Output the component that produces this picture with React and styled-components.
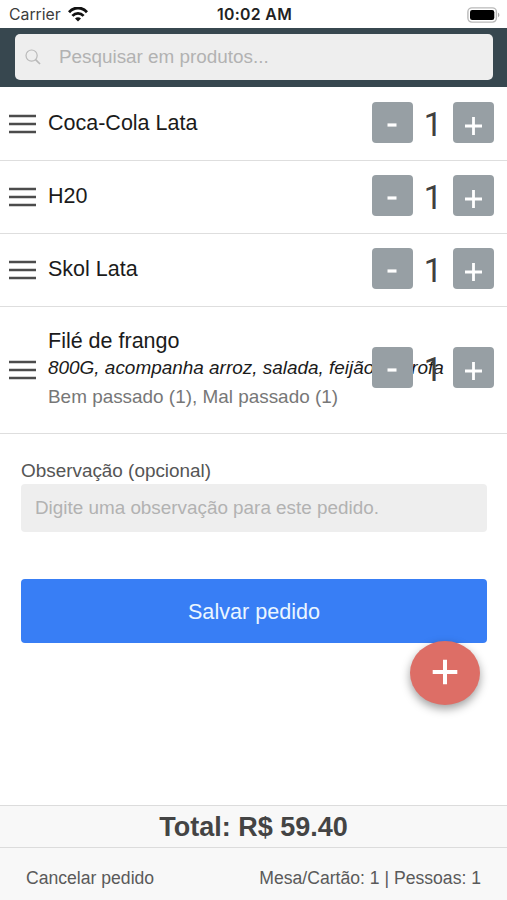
import React from 'react';
import styled, { createGlobalStyle } from 'styled-components';

const GlobalStyle = createGlobalStyle`
  * { box-sizing: border-box; }
  body {
    margin: 0;
    background: #fff;
    font-family: 'Liberation Sans', Arial, sans-serif;
    color: #4a4a4a;
  }
  button, input { font-family: inherit; }
`;

const Screen = styled.div`
  position: relative;
  display: flex;
  flex-direction: column;
  width: 507px;
  height: 900px;
  overflow: hidden;
  background: #fff;
`;

const StatusBar = styled.div`
  display: grid;
  grid-template-columns: 1fr auto 1fr;
  align-items: center;
  height: 28px;
  flex: none;
  padding: 1px 7px 0 9px;
  font-family: Inter, sans-serif;
`;

const Carrier = styled.div`
  display: flex;
  align-items: center;
  gap: 7px;
  font-size: 15.8px;
  color: #3c3c3c;
  svg { display: block; }
`;

const Clock = styled.div`
  font-size: 15.8px;
  font-weight: 600;
  letter-spacing: 0.35px;
  color: #222;
`;

const Battery = styled.svg`
  justify-self: end;
  display: block;
`;

const Toolbar = styled.header`
  flex: none;
  height: 59px;
  padding: 6px 14px 7px 15px;
  background: #37474f;
`;

const SearchBox = styled.label`
  display: flex;
  align-items: center;
  height: 46px;
  padding-left: 10px;
  gap: 18px;
  border-radius: 5px;
  background: #eee;
  svg { flex: none; }
`;

const Input = styled.input`
  flex: 1;
  min-width: 0;
  padding: 0;
  border: 0;
  outline: 0;
  background: transparent;
  font-size: 18.87px;
  color: #444;
  &::placeholder { color: #b2b2b2; opacity: 1; }
`;

const ProductList = styled.ul`
  flex: none;
  margin: 0;
  padding: 1px 0 0;
  list-style: none;
`;

const ProductRow = styled.li`
  display: flex;
  align-items: center;
  height: ${(p) => (p.$tall ? 127 : 73)}px;
  padding: 0 13px 2px 9px;
  border-bottom: 1px solid #dedede;
`;

const DragHandle = styled.svg`
  flex: none;
  display: block;
  margin: 1px 12px 0 0;
`;

const ProductInfo = styled.div`
  flex: 1;
  min-width: 0;
  padding-top: ${(p) => (p.$tall ? 3 : 0)}px;
  white-space: nowrap;
`;

const ProductName = styled.div`
  font-size: 21.5px;
  line-height: 26px;
  color: #1b1b1b;
`;

const Description = styled.div`
  font-size: 18.95px;
  line-height: 27px;
  font-style: italic;
  color: #1b1b1b;
`;

const Options = styled.div`
  font-size: 18.92px;
  line-height: 32px;
  color: #777;
`;

const Stepper = styled.div`
  position: relative;
  flex: none;
  display: grid;
  grid-template-columns: 41px 40px 41px;
  align-items: center;
  height: 41px;
  margin-bottom: ${(p) => (p.$tall ? 6 : 4)}px;
  text-align: center;
`;

const StepButton = styled.button`
  display: grid;
  place-items: center;
  width: 41px;
  height: 41px;
  padding: 0;
  border: 0;
  border-radius: 4px;
  background: #979fa4;
  color: #fff;
`;

const Quantity = styled.span`
  font-family: Roboto, sans-serif;
  font-size: 33px;
  line-height: 41px;
  padding-top: 3px;
  color: #404040;
`;

const OrderForm = styled.form`
  flex: 1;
  padding: 24px 20px 0 21px;
`;

const FieldLabel = styled.label`
  display: block;
  font-size: 18.9px;
  line-height: 26px;
  color: #555;
`;

const Field = styled.div`
  display: flex;
  height: 48px;
  padding: 0 14px;
  border-radius: 4px;
  background: #eee;
`;

const SaveButton = styled.button`
  display: block;
  width: 100%;
  height: 64px;
  margin-top: 47px;
  padding: 2px 0 0;
  border: 0;
  border-radius: 4px;
  background: #387ef5;
  color: #eaf6ff;
  font-size: 21.6px;
`;

const AddButton = styled.button`
  position: absolute;
  right: 27px;
  bottom: 195px;
  width: 70px;
  height: 64px;
  padding: 0 0 3px;
  border: 0;
  border-radius: 50%;
  display: grid;
  place-items: center;
  background: #dd6e66;
  box-shadow: 0 4px 10px rgba(0, 0, 0, 0.38);
`;

const Footer = styled.footer`
  flex: none;
  background: #f8f8f8;
`;

const Total = styled.div`
  height: 42px;
  border-top: 1px solid #dcdcdc;
  text-align: center;
  font-size: 27px;
  font-weight: 700;
  line-height: 42px;
  color: #444;
`;

const FooterBar = styled.div`
  display: flex;
  justify-content: space-between;
  height: 53px;
  padding: 4px 26px 0;
  border-top: 1px solid #dcdcdc;
  font-size: 17.6px;
  line-height: 52px;
  color: #5a5a5a;
`;

const products = [
  { name: 'Coca-Cola Lata', quantity: 1 },
  { name: 'H20', quantity: 1 },
  { name: 'Skol Lata', quantity: 1 },
  {
    name: 'Filé de frango',
    quantity: 1,
    description: '800G, acompanha arroz, salada, feijão e farofa',
    options: 'Bem passado (1), Mal passado (1)',
  },
];

function WifiIcon() {
  return (
    <svg width="20" height="15" viewBox="0 0 20 15" fill="none" stroke="#111">
      <path d="M1 5.2C6-.4 14-.4 19 5.2" strokeWidth="2.9" />
      <path d="M4.4 8.9c3.2-3.5 8-3.5 11.2 0" strokeWidth="2.7" />
      <path d="M10 14.4 7 11.4c1.7-1.6 4.3-1.6 6 0z" fill="#111" stroke="none" />
    </svg>
  );
}

function SearchIcon() {
  return (
    <svg width="16" height="16" viewBox="0 0 16 16" fill="none" stroke="#b9b9b9" strokeWidth="1.2">
      <circle cx="6.6" cy="6.6" r="5.6" />
      <path d="m10.6 10.6 4.4 4.4" strokeWidth="1.7" />
    </svg>
  );
}

function MinusGlyph() {
  return (
    <svg width="41" height="41" viewBox="0 0 41 41">
      <path d="M15.5 23h9" stroke="#fff" strokeWidth="3.2" />
    </svg>
  );
}

function PlusGlyph() {
  return (
    <svg width="41" height="41" viewBox="0 0 41 41">
      <path d="M12 24h17M20.5 15v18" stroke="#fff" strokeWidth="2.8" />
    </svg>
  );
}

function Product({ name, quantity, description, options }) {
  const tall = Boolean(description);
  return (
    <ProductRow $tall={tall}>
      <DragHandle width="27" height="20" viewBox="0 0 27 20">
        <path d="M0 2h27M0 10h27M0 18h27" stroke="#4c4c4c" strokeWidth="2.5" />
      </DragHandle>
      <ProductInfo $tall={tall}>
        <ProductName>{name}</ProductName>
        {description && <Description>{description}</Description>}
        {options && <Options>{options}</Options>}
      </ProductInfo>
      <Stepper $tall={tall}>
        <StepButton type="button" aria-label="-"><MinusGlyph /></StepButton>
        <Quantity>{quantity}</Quantity>
        <StepButton type="button" aria-label="+"><PlusGlyph /></StepButton>
      </Stepper>
    </ProductRow>
  );
}

export default function App() {
  return (
    <>
      <GlobalStyle />
      <Screen>
        <StatusBar>
          <Carrier>Carrier <WifiIcon /></Carrier>
          <Clock>10:02 AM</Clock>
          <Battery width="33" height="16" viewBox="0 0 33 16">
            <rect x=".9" y=".9" width="28.5" height="14.2" rx="4" fill="#fff" stroke="#b9b9b9" strokeWidth="1.4" />
            <rect x="3" y="3" width="24.3" height="10" rx="2.2" fill="#000" />
            <path d="M31 5.8c1.8.6 1.8 3.8 0 4.4z" fill="#aaa" />
          </Battery>
        </StatusBar>
        <Toolbar>
          <SearchBox>
            <SearchIcon />
            <Input placeholder="Pesquisar em produtos..." />
          </SearchBox>
        </Toolbar>
        <ProductList>
          {products.map((product) => <Product key={product.name} {...product} />)}
        </ProductList>
        <OrderForm>
          <FieldLabel htmlFor="note">Observação (opcional)</FieldLabel>
          <Field>
            <Input id="note" placeholder="Digite uma observação para este pedido." />
          </Field>
          <SaveButton type="button">Salvar pedido</SaveButton>
        </OrderForm>
        <Footer>
          <Total>Total: R$ 59.40</Total>
          <FooterBar>
            <span>Cancelar pedido</span>
            <span>Mesa/Cartão: 1 | Pessoas: 1</span>
          </FooterBar>
        </Footer>
        <AddButton type="button" aria-label="+">
          <svg width="26" height="26" viewBox="0 0 26 26">
            <path d="M.7 13h24.6M13 .7v24.6" stroke="#fff" strokeWidth="4" />
          </svg>
        </AddButton>
      </Screen>
    </>
  );
}
